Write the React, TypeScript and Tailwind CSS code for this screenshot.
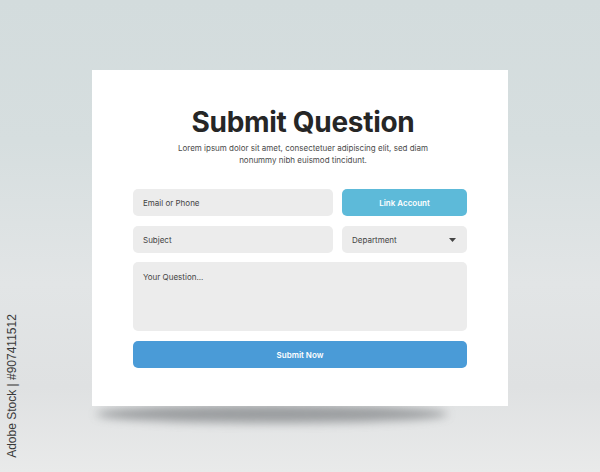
const font = { fontFamily: "Inter, 'Noto Sans', sans-serif" };

const Field = ({ label, tall }: { label: string; tall?: boolean }) => (
  <div
    className={`rounded-[5px] bg-[#ececec] px-[10px] text-[8px] text-[#444] ${
      tall ? "h-[69px] pt-[9px]" : "flex h-[27px] items-center"
    }`}
  >
    {label}
  </div>
);

export default function App() {
  return (
    <div
      className="relative h-[472px] w-[600px] overflow-hidden bg-[linear-gradient(180deg,#d3dcdd_0%,#d6dedf_30%,#e2e5e6_60%,#dfe1e2_82%,#e9eaea_100%)]"
      style={font}
    >
      <div className="flex justify-center pt-[70px]">
        <div className="relative">
          {/* floor shadow under the card */}
          <div className="absolute bottom-[-17px] left-[4px] h-[18px] w-[352px] rounded-[50%] bg-[#7d8083] opacity-70 blur-[5px]" />
          <div className="relative flex h-[336px] w-[416px] flex-col items-center bg-white px-[41px] pt-[35px]">
            <div className="ml-[6px] flex flex-col items-center">
              <h1 className="text-[28px] font-bold leading-[34px] tracking-[-0.3px] text-[#262626]">
                Submit Question
              </h1>
              <p className="mt-[3px] w-[272px] text-center text-[8px] leading-[12px] text-[#4a4a4a]">
                Lorem ipsum dolor sit amet, consectetuer adipiscing elit, sed
                diam nonummy nibh euismod tincidunt.
              </p>
            </div>
            <div className="mt-[23px] grid w-full grid-cols-[200px_1fr] gap-x-[9px] gap-y-[10px]">
              <Field label="Email or Phone" />
              <button className="h-[27px] rounded-[5px] bg-[#5dbad9] text-[8px] font-semibold text-white">
                Link Account
              </button>
              <Field label="Subject" />
              <div className="flex h-[27px] items-center justify-between rounded-[5px] bg-[#ececec] pl-[10px] pr-[11px] text-[8px] text-[#444]">
                <span>Department</span>
                <svg width="7" height="4" viewBox="0 0 7 4">
                  <path d="M0 0h7L3.5 4z" fill="#444" />
                </svg>
              </div>
              <div className="col-span-2 -mt-[1px]">
                <Field label="Your Question..." tall />
              </div>
              <button className="col-span-2 h-[27px] rounded-[5px] bg-[#4a9bd7] text-[8px] font-semibold text-white">
                Submit Now
              </button>
            </div>
          </div>
        </div>
      </div>

      <div
        className="absolute left-[12px] top-[386px] origin-center -translate-x-1/2 -translate-y-1/2 -rotate-90 whitespace-nowrap text-[12px] text-[#3a3a3a]"
        style={{ fontFamily: "'Liberation Sans', Arial, sans-serif" }}
      >
        Adobe Stock | #907411512
      </div>
    </div>
  );
}
